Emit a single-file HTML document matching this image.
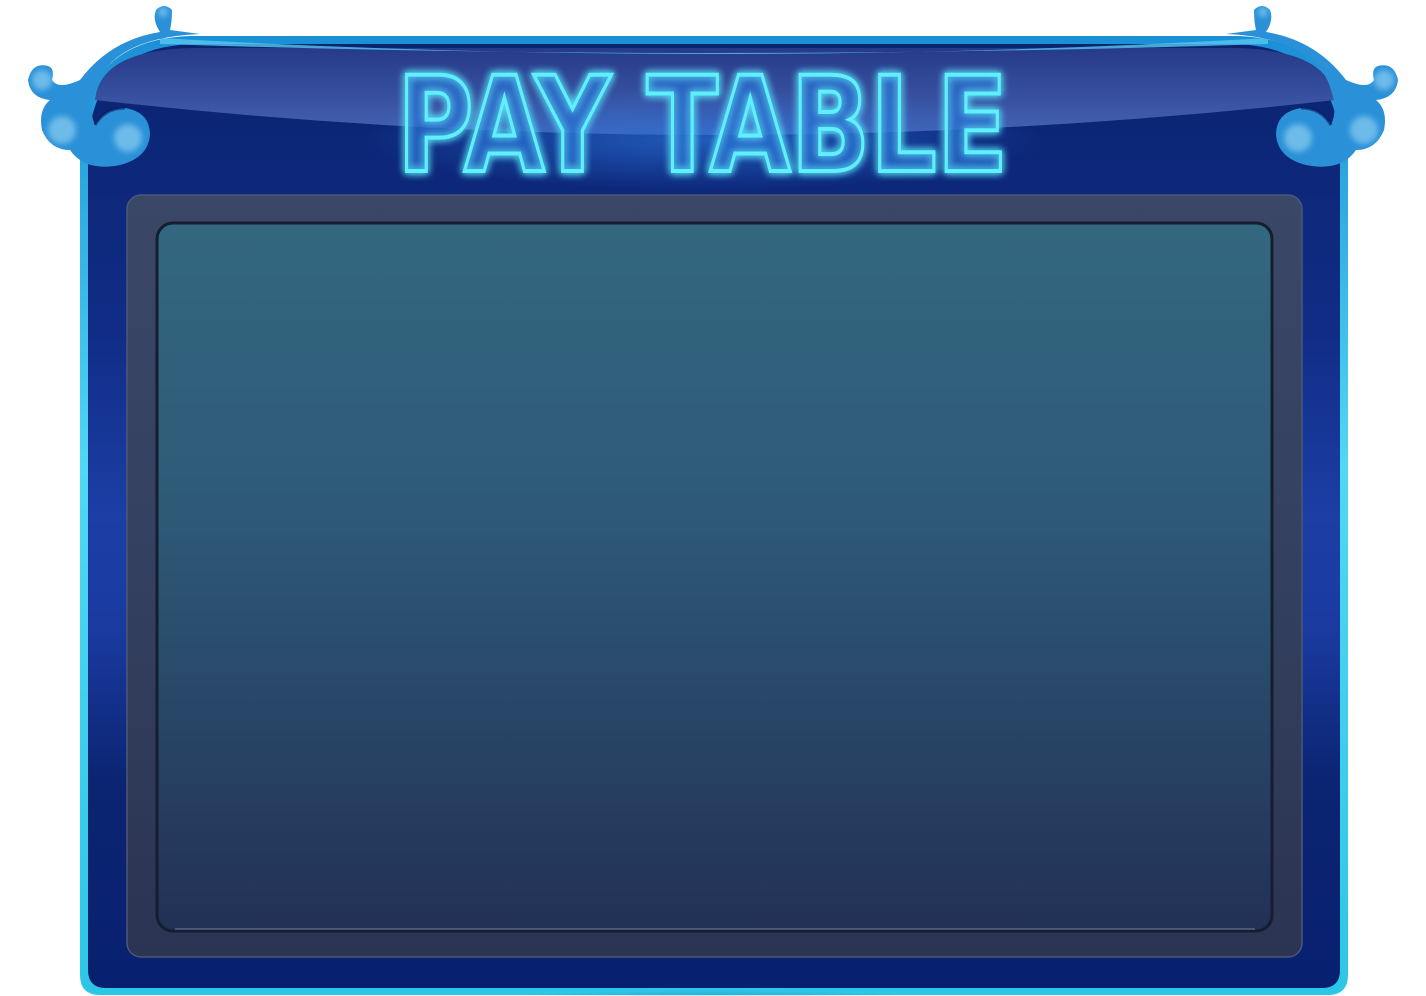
<!DOCTYPE html>
<html><head><meta charset="utf-8"><style>
html,body{margin:0;padding:0;background:#fff;width:1426px;height:996px;overflow:hidden;position:relative;font-family:"Liberation Sans",sans-serif}
.abs{position:absolute}
</style></head><body>
<svg class="abs" style="left:0;top:0" width="1426" height="996" viewBox="0 0 1426 996">
<defs>
<linearGradient id="side" x1="0" y1="0" x2="0" y2="1">
<stop offset="0" stop-color="#0a2470"/><stop offset="0.3" stop-color="#102c85"/><stop offset="0.5" stop-color="#1c3ea5"/><stop offset="0.62" stop-color="#1a3aa0"/><stop offset="0.78" stop-color="#0b2572"/><stop offset="1" stop-color="#082070"/>
</linearGradient>
<linearGradient id="rim" x1="0" y1="0" x2="0" y2="1">
<stop offset="0" stop-color="#1b8fd6"/><stop offset="0.45" stop-color="#50d8f4"/><stop offset="1" stop-color="#2cc6e6"/>
</linearGradient>
<linearGradient id="panel" x1="0" y1="0" x2="0" y2="1">
<stop offset="0" stop-color="#3b4766"/><stop offset="0.5" stop-color="#34405f"/><stop offset="1" stop-color="#2b3452"/>
</linearGradient>
<linearGradient id="screen" x1="0" y1="0" x2="0" y2="1">
<stop offset="0" stop-color="#33677f"/><stop offset="0.4" stop-color="#2e5a78"/><stop offset="1" stop-color="#223155"/>
</linearGradient>
<linearGradient id="gloss" x1="0" y1="0" x2="0" y2="1">
<stop offset="0" stop-color="#263a88"/><stop offset="1" stop-color="#4463b2"/>
</linearGradient>
<radialGradient id="bglow" cx="0.5" cy="1" r="0.5">
<stop offset="0" stop-color="#2b5ed0"/><stop offset="1" stop-color="#0a2470" stop-opacity="0"/>
</radialGradient>
<radialGradient id="tglow" cx="0.5" cy="0.5" r="0.5">
<stop offset="0" stop-color="#2a70d8" stop-opacity="0.7"/><stop offset="1" stop-color="#2a70d8" stop-opacity="0"/>
</radialGradient>
<filter id="glow" x="-10%" y="-30%" width="120%" height="160%"><feGaussianBlur stdDeviation="4" result="b"/><feMerge><feMergeNode in="b"/><feMergeNode in="b"/><feMergeNode in="SourceGraphic"/></feMerge></filter>
<filter id="soft"><feGaussianBlur stdDeviation="3"/></filter>
</defs>
<path d="M80 150 Q80 40 190 36 L1238 36 Q1348 40 1348 150 L1348 975 Q1348 995 1328 995 L100 995 Q80 995 80 975 Z" fill="url(#rim)"/>
<path d="M88 155 Q88 48 192 44 L1236 44 Q1340 48 1340 155 L1340 970 Q1340 988 1322 988 L106 988 Q88 988 88 970 Z" fill="url(#side)"/>
<ellipse cx="714" cy="990" rx="360" ry="40" fill="url(#bglow)"/>
<path d="M95 100 Q100 50 192 48 L1236 48 Q1330 50 1335 100 Q714 170 95 100 Z" fill="url(#gloss)"/>
<ellipse cx="703" cy="140" rx="340" ry="50" fill="url(#tglow)"/>
<path d="M160 38 Q714 70 1268 38 L1268 44 Q714 62 160 44Z" fill="#55c8f0" opacity="0.8"/>
<rect x="127" y="195" width="1175" height="762" rx="14" fill="url(#panel)" stroke="#4a5878" stroke-width="1.5"/>
<rect x="157" y="223" width="1115" height="708" rx="16" fill="url(#screen)" stroke="#161d30" stroke-width="3"/>
<path d="M175 929 L1255 929" stroke="#6a7ea0" stroke-width="1.5" opacity="0.7"/>
<g id="orn">
<path fill="#2a90d8" d="M200 34 Q110 38 95 90 Q88 110 95 125 Q105 108 125 108 Q150 112 150 135 Q148 158 120 165 Q85 172 70 150 Q50 150 42 130 Q38 110 50 100 Q30 98 28 80 Q32 62 48 66 Q55 68 52 80 Q58 90 80 80 Q110 40 160 32 Q152 20 156 10 Q164 2 172 10 Q172 22 170 30 Z"/>
<g fill="#9ad8f4" opacity="0.6" filter="url(#soft)">
<circle cx="42" cy="80" r="10"/><circle cx="163" cy="12" r="5"/><circle cx="128" cy="138" r="14"/><circle cx="62" cy="130" r="14"/>
</g>
<path fill="none" stroke="#0a1c5a" stroke-width="3" opacity="0.6" d="M95 125 Q105 108 125 108"/>
</g>
<use href="#orn" transform="translate(1426,0) scale(-1,1)"/>
<text x="397" y="171" textLength="611" lengthAdjust="spacingAndGlyphs" font-family="DejaVu Sans, Liberation Sans, sans-serif" font-weight="bold" font-size="132" fill="#2a6fd0" fill-opacity="0.35" stroke="#5ff0ff" stroke-width="4" filter="url(#glow)">PAY TABLE</text>
</svg>
</body></html>
